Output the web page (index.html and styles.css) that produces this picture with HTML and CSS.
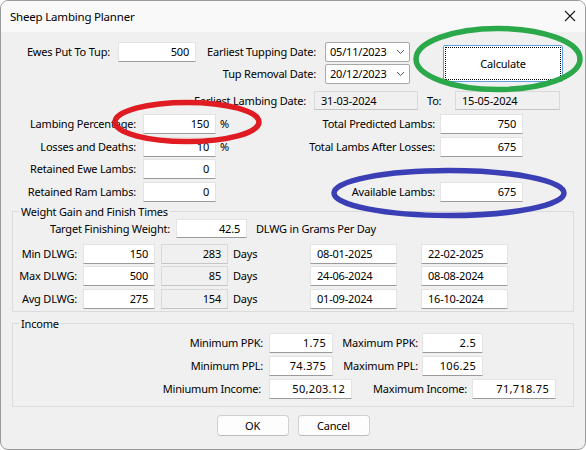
FILE: index.html
```html
<!DOCTYPE html>
<html>
<head>
<meta charset="utf-8">
<link rel="stylesheet" href="styles.css">
</head>
<body>
<div class="window">
  <div class="titlebar">
    <span class="title">Sheep Lambing Planner</span>
    <svg class="close" width="12" height="12" viewBox="0 0 12 12"><path d="M1 1 L11 11 M11 1 L1 11" stroke="#1a1a1a" stroke-width="1.1" fill="none"/></svg>
  </div>
  <div class="content">
    <div class="top-grid">
      <span class="lbl">Ewes Put To Tup:</span>
      <span class="tb num">500</span>
      <span class="lbl lbl-date">Earliest Tupping Date:</span>
      <span class="dp">05/11/2023<svg class="chev" width="9" height="6" viewBox="0 0 9 6"><path d="M1 1 L4.5 4.5 L8 1" stroke="#555" stroke-width="1" fill="none"/></svg></span>
      <span class="calc-cell"><span class="calc"><span class="focus">Calculate</span></span></span>
      <span class="lbl lbl-date r2">Tup Removal Date:</span>
      <span class="dp r2">20/12/2023<svg class="chev" width="9" height="6" viewBox="0 0 9 6"><path d="M1 1 L4.5 4.5 L8 1" stroke="#555" stroke-width="1" fill="none"/></svg></span>
    </div>

    <div class="lambing-row">
      <span class="lbl">Earliest Lambing Date:</span>
      <span class="ro">31-03-2024</span>
      <span class="to">To:</span>
      <span class="ro">15-05-2024</span>
    </div>

    <div class="mid-grid">
      <span class="lbl">Lambing Percentage:</span>
      <span class="tb num">150</span>
      <span class="pct">%</span>
      <span class="lbl">Total Predicted Lambs:</span>
      <span class="tb num">750</span>

      <span class="lbl">Losses and Deaths:</span>
      <span class="tb num">10</span>
      <span class="pct">%</span>
      <span class="lbl">Total Lambs After Losses:</span>
      <span class="tb num">675</span>

      <span class="lbl">Retained Ewe Lambs:</span>
      <span class="tb num">0</span>
      <span></span><span></span><span></span>

      <span class="lbl">Retained Ram Lambs:</span>
      <span class="tb num">0</span>
      <span></span>
      <span class="lbl">Available Lambs:</span>
      <span class="tb num">675</span>
    </div>

    <fieldset class="group weight">
      <legend>Weight Gain and Finish Times</legend>
      <div class="target-row">
        <span class="lbl">Target Finishing Weight:</span>
        <span class="tb num">42.5</span>
        <span class="note">DLWG in Grams Per Day</span>
      </div>
      <div class="dlwg-rows">
        <div class="dlwg-row">
          <span class="lbl">Min DLWG:</span>
          <span class="tb num">150</span>
          <span class="ro num">283</span>
          <span class="days">Days</span>
          <span class="tb date">08-01-2025</span>
          <span class="tb date">22-02-2025</span>
        </div>
        <div class="dlwg-row">
          <span class="lbl">Max DLWG:</span>
          <span class="tb num">500</span>
          <span class="ro num">85</span>
          <span class="days">Days</span>
          <span class="tb date">24-06-2024</span>
          <span class="tb date">08-08-2024</span>
        </div>
        <div class="dlwg-row">
          <span class="lbl">Avg DLWG:</span>
          <span class="tb num">275</span>
          <span class="ro num">154</span>
          <span class="days">Days</span>
          <span class="tb date">01-09-2024</span>
          <span class="tb date">16-10-2024</span>
        </div>
      </div>
    </fieldset>

    <fieldset class="group income">
      <legend>Income</legend>
      <div class="inc-row">
        <span class="lbl l1">Minimum PPK:</span>
        <span class="tb num money w64">1.75</span>
        <span class="lbl l2">Maximum PPK:</span>
        <span class="tb num money w61">2.5</span>
      </div>
      <div class="inc-row">
        <span class="lbl l1">Minimum PPL:</span>
        <span class="tb num money w64">74.375</span>
        <span class="lbl l2">Maximum PPL:</span>
        <span class="tb num money w61">106.25</span>
      </div>
      <div class="inc-row">
        <span class="lbl l1b">Miniumum Income:</span>
        <span class="tb num money w83">50,203.12</span>
        <span class="lbl l2b">Maximum Income:</span>
        <span class="tb num money w84">71,718.75</span>
      </div>
    </fieldset>

    <div class="buttons">
      <span class="btn">OK</span>
      <span class="btn">Cancel</span>
    </div>
  </div>

  <svg class="annot" width="586" height="450" viewBox="0 0 586 450">
    <ellipse cx="187" cy="122" rx="72" ry="19.5" fill="none" stroke="#e11b22" stroke-width="5.5"/>
    <ellipse cx="498" cy="59" rx="82" ry="30.5" fill="none" stroke="#2aa84a" stroke-width="5.5"/>
    <ellipse cx="449" cy="193" rx="115" ry="22.5" fill="none" stroke="#3b3fb5" stroke-width="5.5"/>
  </svg>
</div>
</body>
</html>
```

FILE: styles.css
```css
* { box-sizing: border-box; }

html, body {
  margin: 0;
  padding: 0;
  background: #ffffff;
}

body {
  font-family: "Segoe UI", "Noto Sans", "DejaVu Sans", sans-serif;
  font-size: 11px;
  letter-spacing: -0.2px;
  color: #000;
}

.window {
  position: relative;
  width: 586px;
  height: 450px;
  border: 1px solid #9a9a9a;
  border-radius: 8px;
  background: #f0f0f0;
  overflow: hidden;
}

.titlebar {
  height: 31px;
  background: #f9f9f9;
  display: flex;
  align-items: center;
  justify-content: space-between;
  padding: 0 9px 0 9px;
}

.title {
  font-size: 11.5px;
  line-height: 16px;
}

.close {
  display: block;
  margin-top: -2px;
}

.content {
  display: flex;
  flex-direction: column;
}

.lbl {
  display: block;
  text-align: right;
  white-space: nowrap;
  line-height: 20px;
}

.tb, .ro, .dp {
  display: block;
  height: 20px;
  line-height: 18px;
  white-space: nowrap;
}

.tb {
  background: #ffffff;
  border: 1px solid #e3e3e3;
  border-bottom-color: #9a9a9a;
  border-radius: 1px;
}

.ro {
  background: #f0f0f0;
  border: 1px solid #d9d9d9;
  border-bottom-color: #c4c4c4;
  padding-left: 6px;
}

.num {
  text-align: right;
  padding-right: 6px;
}

.date {
  padding-left: 6px;
}

.money {
  letter-spacing: 0.3px;
}

/* Top area */
.top-grid {
  margin-top: 10px;
  display: grid;
  grid-template-columns: 117px 78px 129px 85px 153px;
  grid-template-rows: 20px 20px;
  row-gap: 2px;
}

.top-grid .lbl { padding-right: 8px; }
.top-grid .lbl-date { padding-right: 9px; grid-column: 3; }
.top-grid .r2 { grid-row: 2; }
.top-grid .dp { grid-column: 4; }

.dp {
  background: #ffffff;
  border: 1px solid #a8a8a8;
  border-radius: 2px;
  padding-left: 4px;
  display: flex;
  align-items: center;
  justify-content: space-between;
  padding-right: 4px;
}

.chev { display: block; }

.calc-cell {
  grid-column: 5;
  grid-row: 1 / span 2;
  display: flex;
  align-items: center;
  padding-left: 33px;
}

.calc {
  display: block;
  width: 120px;
  height: 37px;
  background: #ffffff;
  border: 1px solid #5a9fe0;
  border-radius: 2px;
  padding: 1px;
}

.focus {
  display: flex;
  align-items: center;
  justify-content: center;
  width: 100%;
  height: 100%;
  border: 1px dotted #000;
}

.lambing-row {
  margin-top: 7px;
  display: grid;
  grid-template-columns: 313px 104px 37px 105px;
  height: 19px;
}

.lambing-row .lbl { padding-right: 8px; line-height: 19px; }
.lambing-row .ro { height: 19px; line-height: 17px; }
.to { line-height: 19px; padding-left: 9px; }

.mid-grid {
  margin-top: 4px;
  display: grid;
  grid-template-columns: 142px 73px 24px 200px 83px;
  grid-auto-rows: 20px;
  row-gap: 2.5px;
}

.mid-grid .lbl { padding-right: 7px; }
.mid-grid .lbl:nth-child(5n+4) { padding-right: 5px; }
.pct { line-height: 20px; padding-left: 4px; }

/* Group boxes */
.group {
  margin: 3px 0 0 11px;
  width: 562px;
  border: 1px solid #dcdcdc;
  padding: 0 0 2px 0;
  min-width: 0;
}

.group legend {
  margin-left: 6px;
  padding: 0 2px;
  line-height: 14px;
  font-size: 11px;
}

.target-row {
  display: flex;
  height: 19px;
}

.target-row .lbl { width: 163px; padding-right: 6px; line-height: 19px; }
.target-row .tb { width: 71px; height: 19px; line-height: 17px; }
.note { margin-left: 9px; line-height: 19px; }

.dlwg-rows {
  margin-top: 6px;
  display: flex;
  flex-direction: column;
  gap: 2.5px;
}

.dlwg-row {
  display: flex;
  height: 20px;
}

.dlwg-row .lbl { width: 70px; padding-right: 6px; }
.dlwg-row .tb.num { width: 72px; }
.dlwg-row .ro { width: 67px; margin-left: 6px; }
.days { width: 82px; padding-left: 5px; line-height: 20px; }
.dlwg-row .date { width: 87px; }
.dlwg-row .date + .date { margin-left: 24px; }

.income {
  margin-top: 5px;
  padding-bottom: 7px;
}

.inc-row {
  display: flex;
  height: 20px;
  margin-top: 3px;
}

.inc-row:first-of-type { margin-top: 2px; }

.l1 { width: 256px; padding-right: 6px; }
.l2 { width: 89px; padding-right: 4px; }
.l1b { width: 256px; padding-right: 8px; }
.l2b { width: 120px; padding-right: 5px; }
.w64 { width: 64px; }
.w61 { width: 61px; }
.w83 { width: 83px; }
.w84 { width: 84px; }

.buttons {
  margin-top: 8px;
  display: flex;
  justify-content: center;
  gap: 9px;
}

.btn {
  display: flex;
  align-items: center;
  justify-content: center;
  width: 72px;
  height: 21px;
  background: #fdfdfd;
  border: 1px solid #d0d0d0;
  border-bottom-color: #bcbcbc;
  border-radius: 4px;
}

.annot {
  position: absolute;
  left: -1px;
  top: -1px;
  pointer-events: none;
}
```
